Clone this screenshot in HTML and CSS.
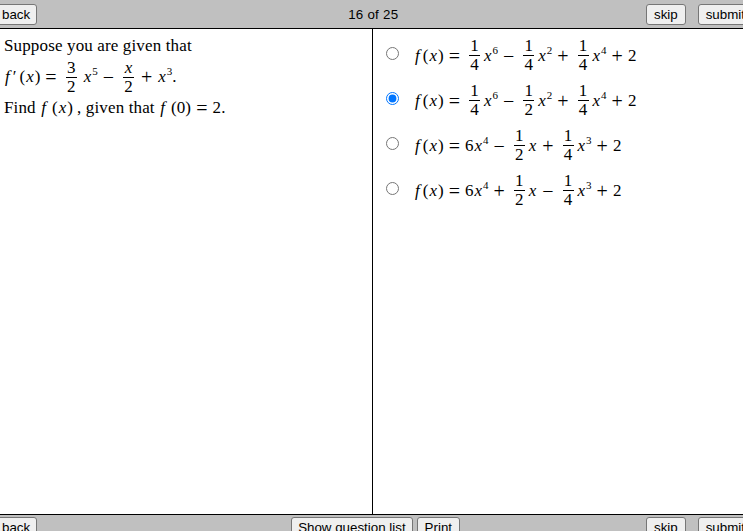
FILE: index.html
```html
<!DOCTYPE html>
<html lang="en">
<head>
<meta charset="utf-8">
<title>Question 16 of 25</title>
<link rel="stylesheet" href="styles.css">
</head>
<body>
<div class="page">
  <header class="bar top">
    <button class="btn back">back</button>
    <span class="count">16 of 25</span>
    <div class="right">
      <button class="btn">skip</button>
      <button class="btn submit">submit</button>
    </div>
  </header>
  <main class="panes">
    <section class="question">
      <div class="line text">Suppose you are given that</div>
      <div class="line mathline"><i class="v f">f</i>′<span class="fn">(<i class="v">x</i>)</span><span class="op">=</span><span class="frac"><span class="num">3</span><span class="den">2</span></span><i class="v after">x</i><sup>5</sup><span class="op">−</span><span class="frac"><span class="num"><i class="v">x</i></span><span class="den">2</span></span><span class="op">+</span><i class="v">x</i><sup>3</sup>.</div>
      <div class="line text">Find <i class="v f">f</i><span class="fn">(<i class="v">x</i>)</span><span class="comma">,</span> given that <i class="v f">f</i><span class="fn">(0)</span><span class="op">=</span>2.</div>
    </section>
    <section class="answers">
      <label class="answer"><input type="radio" name="a"><span class="math"><i class="v f">f</i>(<i class="v">x</i>)<span class="op">=</span><span class="frac"><span class="num">1</span><span class="den">4</span></span><i class="v after">x</i><sup>6</sup><span class="op">−</span><span class="frac"><span class="num">1</span><span class="den">4</span></span><i class="v after">x</i><sup>2</sup><span class="op">+</span><span class="frac"><span class="num">1</span><span class="den">4</span></span><i class="v after">x</i><sup>4</sup><span class="op">+</span>2</span></label>
      <label class="answer"><input type="radio" name="a" checked><span class="math"><i class="v f">f</i>(<i class="v">x</i>)<span class="op">=</span><span class="frac"><span class="num">1</span><span class="den">4</span></span><i class="v after">x</i><sup>6</sup><span class="op">−</span><span class="frac"><span class="num">1</span><span class="den">2</span></span><i class="v after">x</i><sup>2</sup><span class="op">+</span><span class="frac"><span class="num">1</span><span class="den">4</span></span><i class="v after">x</i><sup>4</sup><span class="op">+</span>2</span></label>
      <label class="answer"><input type="radio" name="a"><span class="math"><i class="v f">f</i>(<i class="v">x</i>)<span class="op">=</span>6<i class="v">x</i><sup>4</sup><span class="op">−</span><span class="frac"><span class="num">1</span><span class="den">2</span></span><i class="v after">x</i><span class="op">+</span><span class="frac"><span class="num">1</span><span class="den">4</span></span><i class="v after">x</i><sup>3</sup><span class="op">+</span>2</span></label>
      <label class="answer"><input type="radio" name="a"><span class="math"><i class="v f">f</i>(<i class="v">x</i>)<span class="op">=</span>6<i class="v">x</i><sup>4</sup><span class="op">+</span><span class="frac"><span class="num">1</span><span class="den">2</span></span><i class="v after">x</i><span class="op">−</span><span class="frac"><span class="num">1</span><span class="den">4</span></span><i class="v after">x</i><sup>3</sup><span class="op">+</span>2</span></label>
    </section>
  </main>
  <footer class="bar bottom">
    <button class="btn back">back</button>
    <div class="middle">
      <button class="btn list">Show question list</button>
      <button class="btn">Print</button>
    </div>
    <div class="right">
      <button class="btn">skip</button>
      <button class="btn submit">submit</button>
    </div>
  </footer>
</div>
</body>
</html>
```
FILE: styles.css
```css
html, body {
  margin: 0;
  padding: 0;
  height: 100%;
  overflow: hidden;
  background: #fff;
}
.page {
  width: 743px;
  height: 531px;
  display: flex;
  flex-direction: column;
  overflow: hidden;
}
.bar {
  flex: none;
  display: flex;
  align-items: flex-start;
  background: #c0c0c0;
  overflow: hidden;
  font-family: "Liberation Sans", Arial, sans-serif;
  font-size: 13.33px;
  color: #000;
}
.top {
  height: 28px;
  padding-top: 4px;
  box-sizing: border-box;
}
.bottom {
  height: 16px;
  padding-top: 2px;
  box-sizing: border-box;
}
.btn {
  flex: none;
  height: 21px;
  padding: 0 7px;
  margin: 0;
  font: inherit;
  color: #000;
  background: #efefef;
  border: 1px solid #767676;
  border-radius: 3px;
  line-height: 17px;
}
.list {
  padding: 0 6px;
}
.back {
  margin-left: -5px;
  padding: 0 6px;
}
.right {
  display: flex;
  gap: 12px;
  width: 97px;
  flex: none;
  margin-left: auto;
}
.count {
  margin-top: 3px;
  margin-left: 311px;
  line-height: 15px;
  letter-spacing: .25px;
  flex: none;
}
.middle {
  display: flex;
  gap: 4px;
  margin-left: 254px;
}
.panes {
  flex: 1;
  min-height: 0;
  display: flex;
  border-top: 1px solid #000;
  border-bottom: 1px solid #000;
  font-family: "Liberation Serif", "Times New Roman", serif;
  font-size: 17px;
  color: #000;
}
.question {
  width: 373px;
  flex: none;
  box-sizing: border-box;
  padding: 7px 0 0 4px;
  border-right: 1px solid #000;
}
.line {
  display: flex;
  align-items: center;
  white-space: pre;
  height: 20px;
}
.text {
  letter-spacing: .14px;
}
.line + .line {
  margin-top: 1px;
}
.mathline {
  height: 40px;
}
.answers {
  flex: 1;
  min-width: 0;
  padding: 2px 0 0 13px;
}
.answer {
  display: flex;
  align-items: center;
  height: 45px;
}
.answer input {
  margin: 0;
  width: 13px;
  height: 13px;
  flex: none;
  accent-color: #0075ff;
}
.math {
  margin: 4px 0 0 15px;
  display: flex;
  align-items: center;
  white-space: pre;
}
.v {
  margin: 0 1px;
  letter-spacing: 0;
}
.f {
  margin-right: 3px;
}
.fn {
  margin-left: 3px;
}
.comma {
  margin-left: 4px;
}
.op {
  margin: 0 5px;
  font-size: 20px;
  line-height: 20px;
}
.frac {
  display: inline-flex;
  flex-direction: column;
  align-items: center;
  margin: 0 2px 0 4px;
  min-width: 11px;
  line-height: 16px;
}
.num {
  display: block;
  width: 100%;
  text-align: center;
  border-bottom: 1px solid #000;
  padding-bottom: 1px;
}
.den {
  display: block;
  padding-top: 1px;
}
.after {
  margin-left: 2px;
}
.mathline .after {
  margin-left: 5px;
}
sup {
  font-size: 11px;
  line-height: 0;
  position: relative;
  top: -6px;
  vertical-align: baseline;
}
```
